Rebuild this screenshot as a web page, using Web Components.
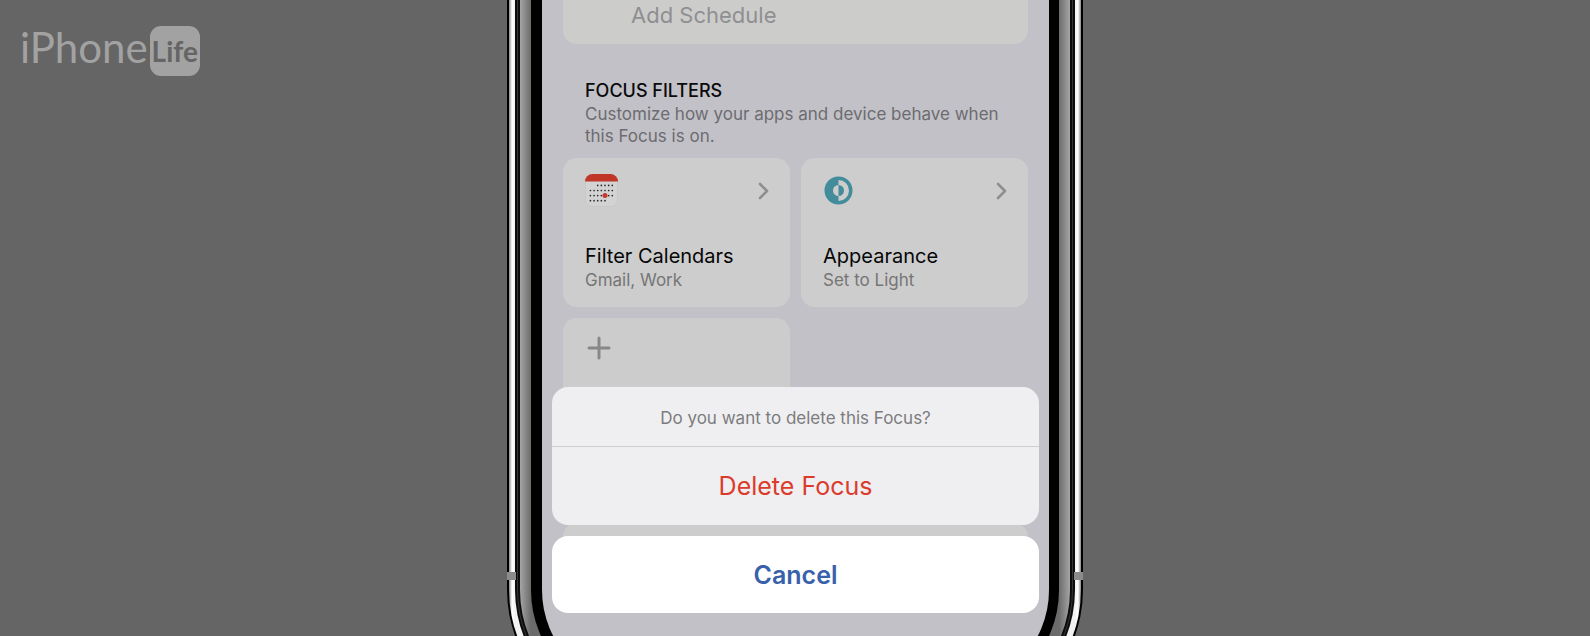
<!DOCTYPE html>
<html lang="en">
<head>
<meta charset="utf-8">
<meta name="viewport" content="width=device-width, initial-scale=1">
<title>iPhone Life – Delete Focus</title>
<style>
  body { margin: 0; background: #656565; font-family: Inter, "Liberation Sans", sans-serif; }
</style>
</head>
<body>
<tip-page>
  <brand-logo slot="brand"></brand-logo>
  <phone-frame>
    <add-row>Add Schedule</add-row>
    <filter-section>
      <span slot="title">FOCUS FILTERS</span>
      <span slot="text">Customize how your apps and device behave when this Focus is on.</span>
      <filter-card>
        <calendar-icon slot="icon"></calendar-icon>
        Filter Calendars<span slot="detail">Gmail, Work</span>
      </filter-card>
      <filter-card>
        <appearance-icon slot="icon"></appearance-icon>
        Appearance<span slot="detail">Set to Light</span>
      </filter-card>
      <add-card></add-card>
    </filter-section>
    <action-sheet slot="sheet">
      <span slot="question">Do you want to delete this Focus?</span>
      <span slot="action">Delete Focus</span>
      <span slot="cancel">Cancel</span>
    </action-sheet>
  </phone-frame>
</tip-page>
<script>
const define = (name, html) => customElements.define(name, class extends HTMLElement {
  constructor() {
    super();
    this.attachShadow({ mode: "open" }).innerHTML = html;
  }
});

define("tip-page", `
  <style>
    :host { display: grid; grid-template-columns: 1fr auto 1fr; height: 100vh; overflow: hidden; }
    header { padding: 26px 20px; }
  </style>
  <header><slot name="brand"></slot></header>
  <main><slot></slot></main>`);

define("brand-logo", `
  <style>
    :host { display: flex; align-items: flex-start; gap: 2px; color: #a2a2a2; font-family: Lato, "Open Sans", sans-serif; }
    .word { font-size: 42px; line-height: 42px; }
    .tile { width: 50px; height: 50px; border-radius: 11px; background: #a2a2a2; color: #656565; font-size: 28px; line-height: 50px; font-weight: 700; text-align: center; }
  </style>
  <span class="word">iPhone</span><span class="tile">Life</span>`);

define("phone-frame", `
  <style>
    :host { display: block; position: relative; }
    .edge { padding: 0 2px 2px; background: #000; border-radius: 0 0 135px 135px; }
    .steel { padding: 0 6px 6px; background: linear-gradient(90deg, #888 0, #fff 3px, #f2f2f2 6px, #f2f2f2 calc(100% - 6px), #fff calc(100% - 3px), #888 100%); border-radius: 0 0 133px 133px; }
    .gap { padding: 0 2px 2px; background: #0c0c0c; border-radius: 0 0 127px 127px; }
    .seam { padding: 0 1px 1px; background: #2f3538; border-radius: 0 0 125px 125px; }
    .line { padding: 0 2px 2px; background: #0c0c0c; border-radius: 0 0 124px 124px; }
    .band { padding: 0 11px 11px; background: linear-gradient(90deg, #a5a5a5 0, #6b6b6b 11px, #6b6b6b calc(100% - 11px), #a5a5a5 100%); border-radius: 0 0 122px 122px; }
    .bezel { padding: 0 10px 11px 11px; background: #000; border-radius: 0 0 111px 111px; }
    .screen { box-sizing: border-box; position: relative; width: 507px; max-width: 90vw; padding: 0 21px 77px; background: #c2c1c7; border-radius: 0 0 100px 100px; }
    .under { height: 90px; margin-top: 56px; border-radius: 14px; background: #cdcdcd; }
    .sheet { position: absolute; left: 10px; right: 10px; bottom: 77px; }
    .mark { position: absolute; top: 572px; width: 9px; height: 8px; background: #8b8b8b; }
    .left { left: 0; } .right { right: 0; }
  </style>
  <div class="edge"><div class="steel"><div class="gap"><div class="seam"><div class="line"><div class="band"><div class="bezel">
    <div class="screen">
      <slot></slot>
      <div class="under"></div>
      <div class="sheet"><slot name="sheet"></slot></div>
    </div>
  </div></div></div></div></div></div></div>
  <div class="mark left"></div><div class="mark right"></div>`);

define("add-row", `
  <style>
    :host { display: block; }
    button { display: block; width: 100%; height: 44px; padding: 0 68px 14px; border: 0; border-radius: 0 0 14px 14px; background: #cccccb; color: #8f8f91; font: 400 22px/30px Inter, sans-serif; text-align: left; }
  </style>
  <button type="button"><slot></slot></button>`);

define("filter-section", `
  <style>
    :host { display: block; padding-top: 34px; }
    h2 { margin: 0 22px; font-size: 18px; line-height: 25px; font-weight: 500; color: #0a0a0c; }
    p { margin: 0 22px 11px; font-size: 17px; line-height: 22px; color: #6c6c70; }
    .cards { display: grid; grid-template-columns: 1fr 1fr; gap: 11px; }
  </style>
  <h2><slot name="title"></slot></h2>
  <p><slot name="text"></slot></p>
  <div class="cards"><slot></slot></div>`);

define("filter-card", `
  <style>
    :host { display: block; }
    button { box-sizing: border-box; display: flex; flex-direction: column; justify-content: space-between; width: 100%; height: 149px; padding: 16px 21px 15px 22px; border: 0; border-radius: 14px; background: #cdcdcd; text-align: left; font-family: Inter, sans-serif; }
    .top { display: flex; justify-content: space-between; align-items: center; }
    .name { display: block; font-size: 20px; line-height: 24px; color: #060606; }
    .detail { display: block; font-size: 17px; line-height: 24px; color: #757575; }
    svg { display: block; }
  </style>
  <button type="button">
    <span class="top">
      <slot name="icon"></slot>
      <svg width="11" height="18" viewBox="0 0 11 18" fill="none" stroke="#8e8e8f" stroke-width="2.600" stroke-linecap="round" stroke-linejoin="round"><path d="M2 2l7 7-7 7"/></svg>
    </span>
    <span><span class="name"><slot></slot></span><span class="detail"><slot name="detail"></slot></span></span>
  </button>`);

define("add-card", `
  <style>
    :host { display: block; }
    button { display: flex; align-items: flex-start; width: 100%; height: 149px; padding: 18px 24px; border: 0; border-radius: 14px; background: #cccccc; }
  </style>
  <button type="button" aria-label="Add filter">
    <svg width="24" height="24" viewBox="0 0 24 24" stroke="#88888a" stroke-width="3" stroke-linecap="round"><path d="M12 2v20M2 12h20"/></svg>
  </button>`);

// Each row of day dots: first column, last column, height.
const dots = [[2, 6, 11.4], [0, 6, 16.5], [0, 6, 21.6], [0, 4, 26.7]]
  .map(([first, last, y]) => {
    let row = "";
    for (let i = first; i <= last; i++) row += `<circle cx="${5.4 + i * 3.65}" cy="${y}" r=".85"/>`;
    return row;
  }).join("");

define("calendar-icon", `
  <style>:host { display: block; } svg { display: block; }</style>
  <svg width="33" height="33" viewBox="0 0 33 33">
    <rect x=".5" y=".5" width="32" height="32" rx="7" fill="#d3d3d3" stroke="#c2c2c2" stroke-width=".6"/>
    <path d="M0 7.500A7.500 7.500 0 0 1 7.500 0h18A7.500 7.500 0 0 1 33 7.500z" fill="#bf3629"/>
    <g fill="#2a2a2a">${dots}</g>
    <circle cx="20" cy="21.600" r="2.500" fill="#c8382b"/>
  </svg>`);

define("appearance-icon", `
  <style>:host { display: block; } svg { display: block; }</style>
  <svg width="33" height="33" viewBox="0 0 33 33">
    <circle cx="15.500" cy="16.500" r="14" fill="#438c9b"/>
    <path d="M15.500 6a10.500 10.500 0 0 1 0 21v-5a5.500 5.500 0 0 0 0-11z" fill="#cdcdcd"/>
    <path d="M15.500 11a5.500 5.500 0 0 0 0 11z" fill="#cdcdcd"/>
  </svg>`);

define("action-sheet", `
  <style>
    :host { display: flex; flex-direction: column; gap: 11px; }
    .group { overflow: hidden; border-radius: 16px; background: #efeff1; }
    p { margin: 0; padding: 19px 20px 16px; border-bottom: 1px solid #cfcfd2; font-size: 17px; line-height: 24px; color: #7c7c7e; text-align: center; }
    button { display: block; width: 100%; height: 77px; padding: 0; border: 0; background: none; font: 400 25px/32px Inter, sans-serif; color: #dc3b2c; }
    .delete { height: 78px; }
    .cancel { border-radius: 16px; background: #fff; color: #3961ab; font-weight: 600; }
  </style>
  <div class="group" role="dialog">
    <p><slot name="question"></slot></p>
    <button type="button" class="delete"><slot name="action"></slot></button>
  </div>
  <button type="button" class="cancel"><slot name="cancel"></slot></button>`);
</script>
</body>
</html>
